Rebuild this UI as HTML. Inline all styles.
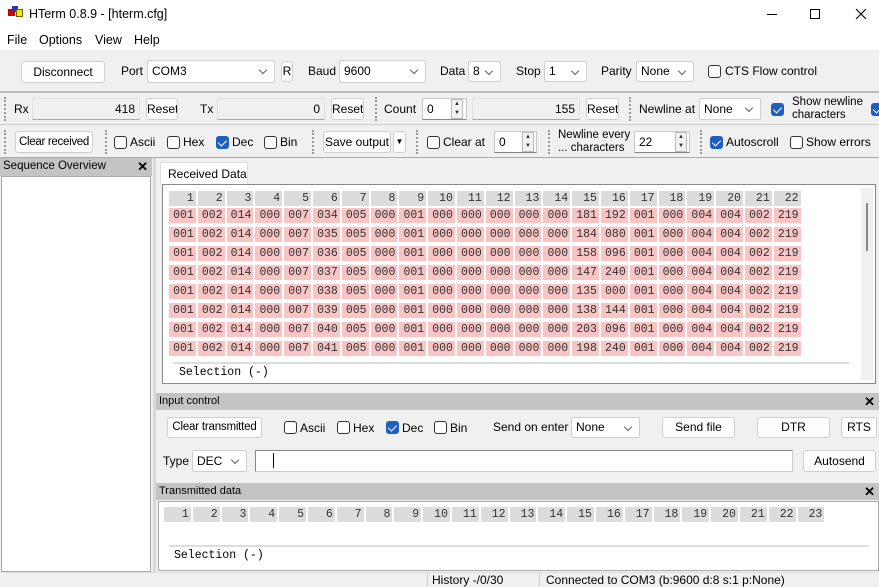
<!DOCTYPE html>
<html><head><meta charset="utf-8">
<style>
*{box-sizing:border-box;margin:0;padding:0}
body{width:879px;height:586px;overflow:hidden;background:#f0f0f0;font-family:"Liberation Sans",sans-serif;font-size:12px;color:#000;position:relative}
.a{position:absolute;white-space:nowrap}
.btn{position:absolute;background:#fdfdfd;border:1px solid #d0d0d0;border-radius:3px;text-align:center;font-size:12px;white-space:nowrap;overflow:hidden}
.inp{position:absolute;background:#fff;border:1px solid #c8c8c8;border-bottom:1px solid #888;font-size:12px;padding-left:4px}
.sel{position:absolute;background:#fff;border:1px solid #cfcfcf;border-radius:2px;font-size:12px;padding-left:4px}
.sel:after{content:"";position:absolute;right:8px;top:6px;width:5px;height:5px;border-right:1px solid #666;border-bottom:1px solid #666;transform:rotate(45deg)}
.cb{position:absolute;width:13px;height:13px;border:1px solid #333;border-radius:3px;background:#fff}
.cb.on{background:#1f5fbf;border-color:#1f5fbf}
.cb.on:after{content:"";position:absolute;left:3px;top:1px;width:4px;height:7px;border-right:1.5px solid #fff;border-bottom:1.5px solid #fff;transform:rotate(45deg)}
.grip{position:absolute;width:2px;border-left:2px dotted #999}
.hdr{position:absolute;background:#c4c4c4;font-size:11px;padding-left:3px;line-height:17px}
.x{position:absolute;right:4px;top:0;font-size:13px;font-weight:bold}
.row{position:absolute;left:169px;display:flex;font-family:"Liberation Mono",monospace;font-size:11.5px}
.row span{width:26.8px;margin-right:2px;height:15px;line-height:15px;text-align:right;padding-right:2px;background:#f8c4c4;color:#333}
.row.h span{background:#dcdcdc}
.spin{position:absolute;width:12px;background:#f2f2f2;border:1px solid #bbb;font-size:6px;line-height:9px;text-align:center;color:#333}
.line{position:absolute;background:#bbb}
</style></head><body>
<div class="a" style="left:0;top:0;width:879px;height:50px;background:#fff"></div>
<div class="a" style="left:8px;top:9px;width:7px;height:7px;background:#c00"></div>
<div class="a" style="left:12px;top:6px;width:6px;height:6px;background:#33a"></div>
<div class="a" style="left:16px;top:9px;width:7px;height:8px;background:#ee0;border:1px solid #660"></div>
<div class="a" style="left:29px;top:7px;font-size:12.5px">HTerm 0.8.9 - [hterm.cfg]</div>
<div class="a" style="left:767px;top:14px;width:10px;height:1px;background:#000"></div>
<div class="a" style="left:810px;top:9px;width:10px;height:10px;border:1px solid #000"></div>
<svg class="a" style="left:855px;top:8px" width="12" height="12"><path d="M1 1L11 11M11 1L1 11" stroke="#000" stroke-width="1.1"/></svg>
<div class="a" style="left:7px;top:33px;font-size:12.5px">File</div>
<div class="a" style="left:39px;top:33px;font-size:12.5px">Options</div>
<div class="a" style="left:95px;top:33px;font-size:12.5px">View</div>
<div class="a" style="left:134px;top:33px;font-size:12.5px">Help</div>
<div class="btn" style="left:21px;top:61px;width:84px;height:22px;line-height:20px">Disconnect</div>
<div class="a" style="left:121px;top:64px">Port</div>
<div class="sel" style="left:147px;top:60px;width:128px;height:23px;line-height:21px">COM3</div>
<div class="btn" style="left:281px;top:61px;width:12px;height:21px;line-height:19px">R</div>
<div class="a" style="left:308px;top:64px">Baud</div>
<div class="sel" style="left:339px;top:60px;width:87px;height:23px;line-height:21px">9600</div>
<div class="a" style="left:440px;top:64px">Data</div>
<div class="sel" style="left:468px;top:61px;width:33px;height:21px;line-height:19px">8</div>
<div class="a" style="left:516px;top:64px">Stop</div>
<div class="sel" style="left:544px;top:61px;width:43px;height:21px;line-height:19px">1</div>
<div class="a" style="left:601px;top:64px">Parity</div>
<div class="sel" style="left:636px;top:61px;width:58px;height:21px;line-height:19px">None</div>
<div class="cb" style="left:708px;top:65px"></div>
<div class="a" style="left:725px;top:64px">CTS Flow control</div>
<div class="line" style="left:0;top:91px;width:879px;height:2px"></div>
<div class="grip" style="left:4px;top:97px;height:24px"></div>
<div class="a" style="left:14px;top:102px">Rx</div>
<div class="inp" style="left:32px;top:98px;width:108px;height:22px;line-height:20px;text-align:right;padding-right:4px;background:#f0f0f0;border-color:#e0e0e0 #e0e0e0 #aaa">418</div>
<div class="btn" style="left:146px;top:98px;width:32px;height:22px;line-height:20px">Reset</div>
<div class="a" style="left:200px;top:102px">Tx</div>
<div class="inp" style="left:217px;top:98px;width:108px;height:22px;line-height:20px;text-align:right;padding-right:4px;background:#f0f0f0;border-color:#e0e0e0 #e0e0e0 #aaa">0</div>
<div class="btn" style="left:331px;top:98px;width:33px;height:22px;line-height:20px">Reset</div>
<div class="grip" style="left:375px;top:97px;height:24px"></div>
<div class="a" style="left:384px;top:102px">Count</div>
<div class="inp" style="left:422px;top:98px;width:45px;height:22px;line-height:20px">0</div>
<div class="spin" style="left:451px;top:99px;height:20px">▲<br>▼</div>
<div class="inp" style="left:472px;top:98px;width:108px;height:22px;line-height:20px;text-align:right;padding-right:4px;background:#f0f0f0;border-color:#e0e0e0 #e0e0e0 #aaa">155</div>
<div class="btn" style="left:586px;top:98px;width:33px;height:22px;line-height:20px">Reset</div>
<div class="grip" style="left:629px;top:97px;height:24px"></div>
<div class="a" style="left:639px;top:102px">Newline at</div>
<div class="sel" style="left:699px;top:98px;width:62px;height:22px;line-height:20px">None</div>
<div class="cb on" style="left:771px;top:103px"></div>
<div class="a" style="left:792px;top:96px;font-size:11.5px;line-height:13px">Show newline<br>characters</div>
<div class="cb on" style="left:871px;top:103px"></div>
<div class="line" style="left:0;top:124px;width:879px;height:1px;background:#ccc"></div>
<div class="grip" style="left:4px;top:130px;height:24px"></div>
<div class="btn" style="left:15px;top:131px;width:78px;height:22px;line-height:20px;font-size:11.5px;letter-spacing:-0.3px">Clear received</div>
<div class="grip" style="left:105px;top:130px;height:24px"></div>
<div class="cb" style="left:114px;top:136px"></div><div class="a" style="left:130px;top:135px">Ascii</div>
<div class="cb" style="left:167px;top:136px"></div><div class="a" style="left:183px;top:135px">Hex</div>
<div class="cb on" style="left:216px;top:136px"></div><div class="a" style="left:232px;top:135px">Dec</div>
<div class="cb" style="left:264px;top:136px"></div><div class="a" style="left:280px;top:135px">Bin</div>
<div class="grip" style="left:312px;top:130px;height:24px"></div>
<div class="btn" style="left:323px;top:131px;width:68px;height:22px;line-height:20px">Save output</div>
<div class="btn" style="left:393px;top:131px;width:13px;height:22px;line-height:20px;font-size:8px">▼</div>
<div class="grip" style="left:416px;top:130px;height:24px"></div>
<div class="cb" style="left:427px;top:136px"></div><div class="a" style="left:443px;top:135px">Clear at</div>
<div class="inp" style="left:494px;top:131px;width:43px;height:22px;line-height:20px">0</div>
<div class="spin" style="left:522px;top:132px;height:20px">▲<br>▼</div>
<div class="grip" style="left:548px;top:130px;height:24px"></div>
<div class="a" style="left:558px;top:129px;font-size:11.5px;line-height:13px">Newline every<br>... characters</div>
<div class="inp" style="left:634px;top:131px;width:56px;height:22px;line-height:20px">22</div>
<div class="spin" style="left:675px;top:132px;height:20px">▲<br>▼</div>
<div class="grip" style="left:700px;top:130px;height:24px"></div>
<div class="cb on" style="left:710px;top:136px"></div><div class="a" style="left:726px;top:135px">Autoscroll</div>
<div class="cb" style="left:790px;top:136px"></div><div class="a" style="left:806px;top:135px">Show errors</div>
<div class="line" style="left:0;top:157px;width:879px;height:1px;background:#aaa"></div>
<div class="hdr" style="left:0;top:158px;width:152px;height:18px;font-size:11.5px">Sequence Overview<span class="x">✕</span></div>
<div class="a" style="left:1px;top:176px;width:150px;height:396px;background:#fff;border:1px solid #aaa"></div>
<div class="a" style="left:153px;top:158px;width:3px;height:414px;background:#d8d8d8"></div>
<div class="a" style="left:160px;top:162px;width:88px;height:23px;background:#fff;border:1px solid #ddd;border-bottom:none;padding:4px 0 0 7px">Received Data</div>
<div class="a" style="left:162px;top:184px;width:714px;height:200px;background:#fff;border:1px solid #888"></div>
<div class="a" style="left:861px;top:188px;width:12px;height:192px;background:#f0f0f0"></div>
<div class="a" style="left:866px;top:203px;width:2px;height:48px;background:#888"></div>
<div class="row h" style="top:191px"><span>1</span><span>2</span><span>3</span><span>4</span><span>5</span><span>6</span><span>7</span><span>8</span><span>9</span><span>10</span><span>11</span><span>12</span><span>13</span><span>14</span><span>15</span><span>16</span><span>17</span><span>18</span><span>19</span><span>20</span><span>21</span><span>22</span></div>
<div class="row" style="top:208px"><span>001</span><span>002</span><span>014</span><span>000</span><span>007</span><span>034</span><span>005</span><span>000</span><span>001</span><span>000</span><span>000</span><span>000</span><span>000</span><span>000</span><span>181</span><span>192</span><span>001</span><span>000</span><span>004</span><span>004</span><span>002</span><span>219</span></div>
<div class="row" style="top:227px"><span>001</span><span>002</span><span>014</span><span>000</span><span>007</span><span>035</span><span>005</span><span>000</span><span>001</span><span>000</span><span>000</span><span>000</span><span>000</span><span>000</span><span>184</span><span>080</span><span>001</span><span>000</span><span>004</span><span>004</span><span>002</span><span>219</span></div>
<div class="row" style="top:246px"><span>001</span><span>002</span><span>014</span><span>000</span><span>007</span><span>036</span><span>005</span><span>000</span><span>001</span><span>000</span><span>000</span><span>000</span><span>000</span><span>000</span><span>158</span><span>096</span><span>001</span><span>000</span><span>004</span><span>004</span><span>002</span><span>219</span></div>
<div class="row" style="top:265px"><span>001</span><span>002</span><span>014</span><span>000</span><span>007</span><span>037</span><span>005</span><span>000</span><span>001</span><span>000</span><span>000</span><span>000</span><span>000</span><span>000</span><span>147</span><span>240</span><span>001</span><span>000</span><span>004</span><span>004</span><span>002</span><span>219</span></div>
<div class="row" style="top:284px"><span>001</span><span>002</span><span>014</span><span>000</span><span>007</span><span>038</span><span>005</span><span>000</span><span>001</span><span>000</span><span>000</span><span>000</span><span>000</span><span>000</span><span>135</span><span>000</span><span>001</span><span>000</span><span>004</span><span>004</span><span>002</span><span>219</span></div>
<div class="row" style="top:303px"><span>001</span><span>002</span><span>014</span><span>000</span><span>007</span><span>039</span><span>005</span><span>000</span><span>001</span><span>000</span><span>000</span><span>000</span><span>000</span><span>000</span><span>138</span><span>144</span><span>001</span><span>000</span><span>004</span><span>004</span><span>002</span><span>219</span></div>
<div class="row" style="top:322px"><span>001</span><span>002</span><span>014</span><span>000</span><span>007</span><span>040</span><span>005</span><span>000</span><span>001</span><span>000</span><span>000</span><span>000</span><span>000</span><span>000</span><span>203</span><span>096</span><span>001</span><span>000</span><span>004</span><span>004</span><span>002</span><span>219</span></div>
<div class="row" style="top:341px"><span>001</span><span>002</span><span>014</span><span>000</span><span>007</span><span>041</span><span>005</span><span>000</span><span>001</span><span>000</span><span>000</span><span>000</span><span>000</span><span>000</span><span>198</span><span>240</span><span>001</span><span>000</span><span>004</span><span>004</span><span>002</span><span>219</span></div>
<div class="a" style="left:173px;top:362px;width:676px;height:2px;background:#ddd"></div>
<div class="a" style="left:179px;top:366px;font-family:'Liberation Mono',monospace;font-size:11.5px">Selection (-)</div>
<div class="hdr" style="left:156px;top:393px;width:723px;height:17px">Input control<span class="x">✕</span></div>
<div class="btn" style="left:167px;top:417px;width:95px;height:21px;line-height:19px;font-size:11.5px;letter-spacing:-0.2px">Clear transmitted</div>
<div class="cb" style="left:284px;top:421px"></div><div class="a" style="left:300px;top:421px">Ascii</div>
<div class="cb" style="left:337px;top:421px"></div><div class="a" style="left:353px;top:421px">Hex</div>
<div class="cb on" style="left:386px;top:421px"></div><div class="a" style="left:402px;top:421px">Dec</div>
<div class="cb" style="left:434px;top:421px"></div><div class="a" style="left:450px;top:421px">Bin</div>
<div class="a" style="left:493px;top:420px">Send on enter</div>
<div class="sel" style="left:571px;top:417px;width:69px;height:21px;line-height:19px">None</div>
<div class="btn" style="left:662px;top:417px;width:73px;height:21px;line-height:19px">Send file</div>
<div class="btn" style="left:757px;top:417px;width:73px;height:21px;line-height:19px">DTR</div>
<div class="btn" style="left:841px;top:417px;width:36px;height:21px;line-height:19px">RTS</div>
<div class="a" style="left:163px;top:454px">Type</div>
<div class="sel" style="left:192px;top:450px;width:55px;height:22px;line-height:20px">DEC</div>
<div class="inp" style="left:255px;top:450px;width:538px;height:22px;border-color:#888 #ccc #ccc #888"></div>
<div class="a" style="left:273px;top:453px;width:1px;height:15px;background:#000"></div>
<div class="btn" style="left:803px;top:450px;width:73px;height:22px;line-height:20px">Autosend</div>
<div class="hdr" style="left:156px;top:483px;width:723px;height:17px">Transmitted data<span class="x">✕</span></div>
<div class="a" style="left:158px;top:501px;width:721px;height:70px;background:#fff;border:1px solid #aaa"></div>
<div class="row h" style="left:164px;top:507px"><span>1</span><span>2</span><span>3</span><span>4</span><span>5</span><span>6</span><span>7</span><span>8</span><span>9</span><span>10</span><span>11</span><span>12</span><span>13</span><span>14</span><span>15</span><span>16</span><span>17</span><span>18</span><span>19</span><span>20</span><span>21</span><span>22</span><span>23</span></div>
<div class="a" style="left:169px;top:545px;width:700px;height:2px;background:#ddd"></div>
<div class="a" style="left:174px;top:549px;font-family:'Liberation Mono',monospace;font-size:11.5px">Selection (-)</div>
<div class="a" style="left:0;top:572px;width:879px;height:14px;background:#f0f0f0;border-top:1px solid #ddd"></div>
<div class="a" style="left:427px;top:572px;width:1px;height:14px;background:#ccc"></div>
<div class="a" style="left:539px;top:572px;width:1px;height:14px;background:#ccc"></div>
<div class="a" style="left:432px;top:573px">History -/0/30</div>
<div class="a" style="left:546px;top:573px">Connected to COM3 (b:9600 d:8 s:1 p:None)</div>
</body></html>
